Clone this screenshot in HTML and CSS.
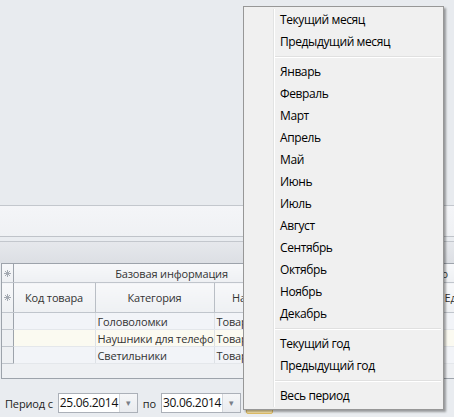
FILE: index.html
```html
<!DOCTYPE html>
<html lang="ru">
<head>
    <meta charset="UTF-8">
    <title>Продажи</title>
    <link rel="stylesheet" href="styles.css">
</head>
<body>
    <div class="app">
        <div class="workspace"></div>
        <div class="toolbar"></div>
        <div class="splitter"></div>
        <div class="group-panel"></div>
        <div class="grid">
            <table>
                <colgroup>
                    <col class="c-ind">
                    <col class="c-code">
                    <col class="c-cat">
                    <col class="c-name">
                    <col class="c-extra">
                    <col class="c-unit">
                </colgroup>
                <tr class="band-row">
                    <td class="ind">
                        <svg class="star" width="7" height="7" viewBox="0 0 7 7">
                            <path d="M3.5 0V7M0 3.5H7M1 1L6 6M6 1L1 6" stroke="#a3a9b1" stroke-width="1"/>
                        </svg>
                    </td>
                    <td class="band" colspan="3">Базовая информация</td>
                    <td class="band band-2" colspan="2">Количество</td>
                </tr>
                <tr class="head-row">
                    <td class="ind">
                        <svg class="star" width="7" height="7" viewBox="0 0 7 7">
                            <path d="M3.5 0V7M0 3.5H7M1 1L6 6M6 1L1 6" stroke="#a3a9b1" stroke-width="1"/>
                        </svg>
                    </td>
                    <td class="head">Код товара</td>
                    <td class="head">Категория</td>
                    <td class="head">Наименование</td>
                    <td class="head">Артикул</td>
                    <td class="head head-left">Ед. изм.</td>
                </tr>
                <tr class="row">
                    <td class="ind"></td>
                    <td></td>
                    <td>Головоломки</td>
                    <td>Товар 1</td>
                    <td></td>
                    <td></td>
                </tr>
                <tr class="row row-alt">
                    <td class="ind"></td>
                    <td></td>
                    <td>Наушники для телефона</td>
                    <td>Товар 2</td>
                    <td></td>
                    <td></td>
                </tr>
                <tr class="row">
                    <td class="ind"></td>
                    <td></td>
                    <td>Светильники</td>
                    <td>Товар 3</td>
                    <td></td>
                    <td></td>
                </tr>
            </table>
            <div class="grid-empty"></div>
        </div>
        <div class="footer">
            <span class="label">Период с</span>
            <div class="date-edit">
                <span class="date-value">25.06.2014</span>
                <span class="date-btn">&#9662;</span>
            </div>
            <span class="label">по</span>
            <div class="date-edit">
                <span class="date-value">30.06.2014</span>
                <span class="date-btn">&#9662;</span>
            </div>
            <div class="period-btn"></div>
        </div>
    </div>

    <div class="menu">
        <div class="menu-item">Текущий месяц</div>
        <div class="menu-item">Предыдущий месяц</div>
        <div class="menu-sep"></div>
        <div class="menu-item">Январь</div>
        <div class="menu-item">Февраль</div>
        <div class="menu-item">Март</div>
        <div class="menu-item">Апрель</div>
        <div class="menu-item">Май</div>
        <div class="menu-item">Июнь</div>
        <div class="menu-item">Июль</div>
        <div class="menu-item">Август</div>
        <div class="menu-item">Сентябрь</div>
        <div class="menu-item">Октябрь</div>
        <div class="menu-item">Ноябрь</div>
        <div class="menu-item">Декабрь</div>
        <div class="menu-sep"></div>
        <div class="menu-item">Текущий год</div>
        <div class="menu-item">Предыдущий год</div>
        <div class="menu-sep"></div>
        <div class="menu-item">Весь период</div>
    </div>
</body>
</html>
```

FILE: styles.css
```css
body {
    margin: 0;
    padding: 0;
    font-family: "Open Sans", "Noto Sans", sans-serif;
    font-size: 11px;
    letter-spacing: -0.15px;
    color: #222;
    background-color: #e9ecf0;
    width: 454px;
    height: 417px;
    overflow: hidden;
}
.app {
    display: flex;
    flex-direction: column;
    height: 417px;
}
.workspace {
    height: 205px;
    background-color: #e8ebef;
}
.toolbar {
    height: 30px;
    border-top: 1px solid #c3c7cd;
    border-bottom: 1px solid #bfc3c9;
    background: linear-gradient(#f4f5f8, #eff1f4);
}
.splitter {
    height: 4px;
    border-bottom: 1px solid #c3c7cd;
    background-color: #e9ecf0;
}
.group-panel {
    height: 21px;
    background: linear-gradient(#e6e8ec, #dcdfe4);
}
.grid {
    margin-left: 1px;
    border: 1px solid #9da3ab;
    border-right: none;
    background-color: #eef0f3;
    overflow: hidden;
}
.grid table {
    border-collapse: collapse;
    table-layout: fixed;
    width: 590px;
}
.c-ind { width: 11px; }
.c-code { width: 82px; }
.c-cat { width: 119px; }
.c-name { width: 116px; }
.c-extra { width: 112px; }
.c-unit { width: 150px; }
.grid td {
    padding: 0 2px;
    white-space: nowrap;
    overflow: hidden;
    border-right: 1px solid #dde1e6;
}
.grid .ind {
    padding: 0;
    text-align: center;
    background-color: #eef0f3;
    border-right: 1px solid #9da3ab;
    border-bottom: 1px solid #c0c5cc;
}
.star {
    display: block;
    margin: 0 auto;
}
.band-row td {
    height: 18px;
    background: linear-gradient(#f7f8fa, #eef0f3);
    border-bottom: 1px solid #c0c5cc;
}
.band {
    text-align: center;
    color: #333;
    border-right: 1px solid #c0c5cc !important;
}
.band-2 {
    text-align: left;
    padding-left: 56px !important;
}
.head-row td {
    height: 29px;
    background: linear-gradient(#f7f8fa, #eef0f3);
    border-bottom: 1px solid #c0c5cc;
    border-right: 1px solid #b9bec5;
}
.head {
    text-align: center;
    color: #333;
}
.head-left {
    text-align: left;
}
.row td {
    height: 16px;
    background-color: #f2f4f8;
    border-bottom: 1px solid #e4e7eb;
    color: #333;
}
.row-alt td {
    background-color: #fbfaf1;
}
.grid-empty {
    height: 14px;
}
.footer {
    display: flex;
    align-items: center;
    padding: 12px 0 0 5px;
    height: 24px;
}
.label {
    color: #222;
    margin-right: 5px;
}
.date-edit {
    display: flex;
    height: 18px;
    margin-right: 5px;
    border: 1px solid #abb0b8;
    background-color: #fff;
}
.date-value {
    width: 59px;
    padding-left: 1px;
    line-height: 18px;
    font-size: 12px;
    letter-spacing: -0.3px;
    color: #111;
}
.date-btn {
    width: 17px;
    border-left: 1px solid #d4d7dc;
    background: linear-gradient(#f5f6f8, #e9ebef);
    color: #7a7f87;
    font-size: 9px;
    text-align: center;
    line-height: 18px;
}
.period-btn {
    width: 25px;
    height: 20px;
    background-color: #fbe6a8;
    border: 1px solid #e0bd66;
    border-radius: 2px;
}
.menu {
    position: absolute;
    left: 243px;
    top: 6px;
    width: 199px;
    padding: 2px 0;
    background-color: #f0f0f0;
    border: 1px solid #979797;
    box-shadow: 2px 2px 2px rgba(0, 0, 0, 0.35);
    font-size: 12px;
    letter-spacing: -0.4px;
    color: #000;
}
.menu-item {
    height: 22px;
    line-height: 22px;
    margin-left: 29px;
    padding-left: 6px;
    border-left: 1px solid #e2e3e3;
    box-shadow: inset 1px 0 0 #fff;
}
.menu-sep {
    height: 8px;
    margin-left: 29px;
    margin-right: 2px;
    border-left: 1px solid #e2e3e3;
    box-shadow: inset 1px 0 0 #fff;
    background: linear-gradient(transparent 3px, #e0e0e0 3px, #e0e0e0 4px, #fff 4px, #fff 5px, transparent 5px);
}
```
